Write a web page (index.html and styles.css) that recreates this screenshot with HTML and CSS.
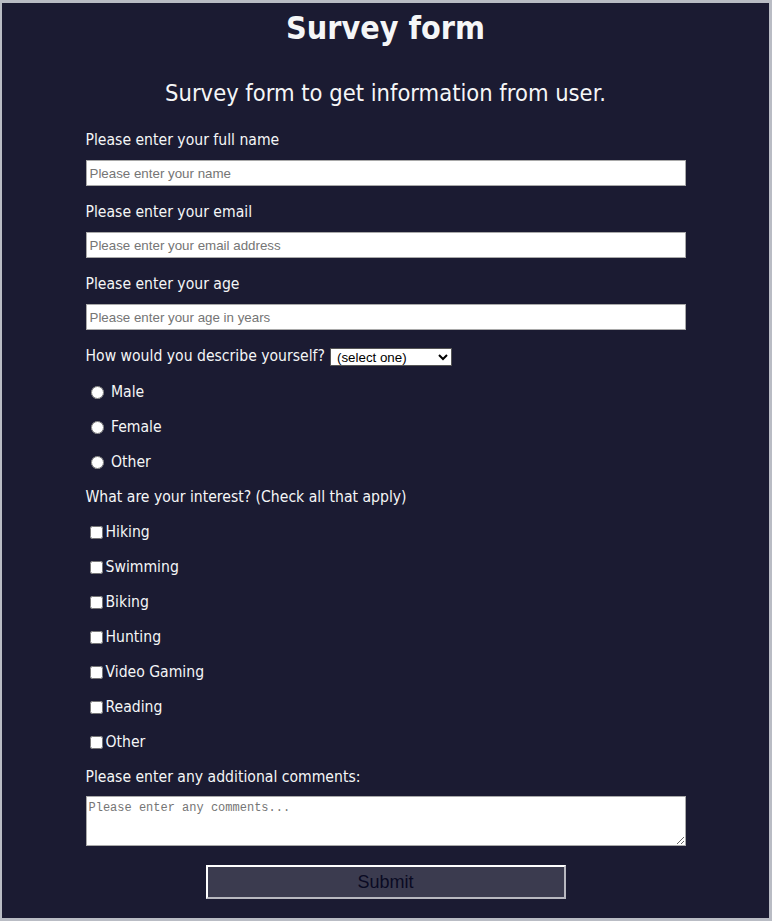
FILE: index.html
```html
<!DOCTYPE html>
<html lang="en">
<head>
<meta charset="utf-8">
<title>Survey form</title>
<link rel="stylesheet" href="styles.css">
</head>
<body>
<main class="page">
  <h1 class="title" id="title">Survey form</h1>
  <p class="description" id="description">Survey form to get information from user.</p>
  <form class="survey" id="survey-form">
    <div class="group">
      <label class="lbl" for="name">Please enter your full name</label>
      <input class="field" id="name" type="text" placeholder="Please enter your name">
    </div>
    <div class="group">
      <label class="lbl" for="email">Please enter your email</label>
      <input class="field" id="email" type="email" placeholder="Please enter your email address">
    </div>
    <div class="group">
      <label class="lbl" for="number">Please enter your age</label>
      <input class="field" id="number" type="number" placeholder="Please enter your age in years">
    </div>
    <div class="select-row">
      <label class="inline-lbl" for="dropdown">How would you describe yourself?</label>
      <select class="dropdown" id="dropdown">
        <option>(select one)</option>
        <option>Student</option>
        <option>Professional</option>
      </select>
    </div>
    <div class="rows">
      <label class="row"><input type="radio" name="gender" class="radio"> Male</label>
      <label class="row"><input type="radio" name="gender" class="radio"> Female</label>
      <label class="row"><input type="radio" name="gender" class="radio"> Other</label>
      <div class="row">What are your interest? (Check all that apply)</div>
      <label class="row"><input type="checkbox" class="check">Hiking</label>
      <label class="row"><input type="checkbox" class="check">Swimming</label>
      <label class="row"><input type="checkbox" class="check">Biking</label>
      <label class="row"><input type="checkbox" class="check">Hunting</label>
      <label class="row"><input type="checkbox" class="check">Video Gaming</label>
      <label class="row"><input type="checkbox" class="check">Reading</label>
      <label class="row"><input type="checkbox" class="check">Other</label>
      <label class="row" for="comments">Please enter any additional comments:</label>
    </div>
    <textarea class="comments" id="comments" placeholder="Please enter any comments..."></textarea>
    <div class="actions">
      <button class="submit" id="submit" type="submit">Submit</button>
    </div>
  </form>
</main>
</body>
</html>
```
FILE: styles.css
```css
html, body {
  margin: 0;
  padding: 0;
}
body {
  background: #b9bcc4;
  height: 921px;
  overflow: hidden;
}
.page {
  margin: 3px 3px 0 2px;
  height: 915px;
  background: #1b1b32;
  color: #f5f6f7;
  font-family: "DejaVu Sans Condensed", "DejaVu Sans", sans-serif;
  padding-top: 6px;
  box-sizing: border-box;
}
.title {
  margin: 0;
  text-align: center;
  font-size: 32px;
  line-height: 38px;
  font-weight: bold;
}
.description {
  margin: 31px 0 0;
  text-align: center;
  font-size: 23.5px;
  line-height: 30px;
}
.survey {
  width: 600px;
  margin: 23px auto 0;
  font-size: 15.6px;
  line-height: 19px;
}
.group {
  margin-bottom: 17px;
}
.lbl {
  display: block;
  margin-bottom: 10px;
}
.field {
  display: block;
  width: 600px;
  height: 26px;
  box-sizing: border-box;
  border: 1px solid #a9a9a9;
  border-radius: 0;
  padding: 1px 3px;
  font-family: "Liberation Sans", Arial, sans-serif;
  font-size: 13.333px;
  background: #fff;
  color: #000;
}
.field::placeholder {
  color: #757575;
}
.select-row {
  display: flex;
  align-items: center;
  height: 19px;
}
.inline-lbl {
  margin-right: 5px;
}
.dropdown {
  width: 122px;
  height: 18px;
  font-family: "Liberation Sans", Arial, sans-serif;
  font-size: 13.333px;
  border: 1px solid #555;
  border-radius: 0;
  background: #fff;
  color: #000;
  padding: 0 0 0 2px;
}
.rows {
  margin-top: 9px;
}
.row {
  display: flex;
  align-items: center;
  height: 35px;
  white-space: pre;
}
.radio {
  width: 13px;
  height: 13px;
  margin: 0 3px 0 5px;
}
.check {
  width: 13px;
  height: 13px;
  margin: 0 3px 0 4px;
}
.comments {
  display: block;
  width: 600px;
  height: 50px;
  box-sizing: border-box;
  margin-top: 1px;
  border: 1px solid #a9a9a9;
  border-radius: 0;
  padding: 4px 2px 2px;
  font-family: "Liberation Mono", "DejaVu Sans Mono", monospace;
  font-size: 12px;
  background: #fff;
  resize: vertical;
}
.comments::placeholder {
  color: #757575;
}
.actions {
  display: flex;
  justify-content: center;
  margin-top: 19px;
}
.submit {
  width: 360px;
  height: 34px;
  background: #3b3b4f;
  border: 2px solid;
  border-color: #ffffff #b8b8c0 #b8b8c0 #ffffff;
  color: #0a0a23;
  font-family: "Liberation Sans", Arial, sans-serif;
  font-size: 18px;
  padding: 0;
}
```
